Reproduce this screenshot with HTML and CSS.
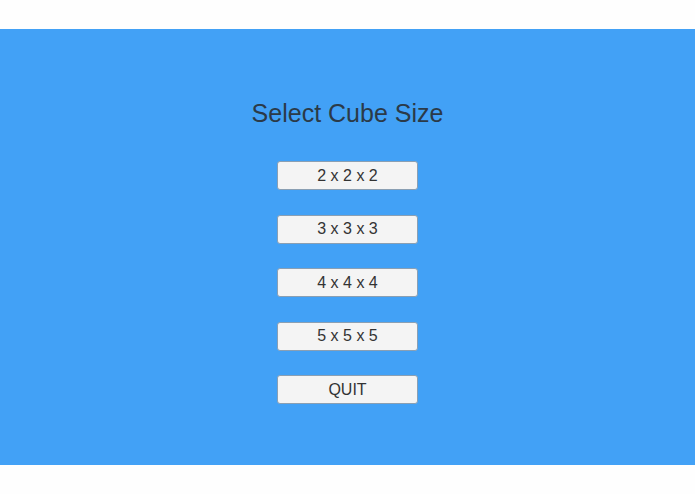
FILE: index.html
```html
<!DOCTYPE html>
<html lang="en">
<head>
    <meta charset="UTF-8">
    <meta name="viewport" content="width=device-width, initial-scale=1.0">
    <title>Select Cube Size</title>
    <link rel="stylesheet" href="styles.css">
</head>
<body>
    <div class="top-bar"></div>
    <div class="menu">
        <h1 class="title">Select Cube Size</h1>
        <div class="buttons">
            <button class="btn">2 x 2 x 2</button>
            <button class="btn">3 x 3 x 3</button>
            <button class="btn">4 x 4 x 4</button>
            <button class="btn">5 x 5 x 5</button>
            <button class="btn">QUIT</button>
        </div>
    </div>
</body>
</html>
```

FILE: styles.css
```css
body {
    margin: 0;
    background-color: #fefefe;
    font-family: "Liberation Sans", Arial, sans-serif;
}
.top-bar {
    height: 29px;
}
.menu {
    height: 436px;
    box-sizing: border-box;
    padding-top: 70px;
    background-color: #42a1f6;
    display: flex;
    flex-direction: column;
    align-items: center;
}
.title {
    margin: 0;
    font-size: 25px;
    line-height: 28px;
    font-weight: normal;
    color: #2b3a48;
}
.buttons {
    margin-top: 34px;
    display: flex;
    flex-direction: column;
    gap: 24.5px;
}
.btn {
    width: 141px;
    height: 29px;
    padding: 0;
    font-family: "Liberation Sans", Arial, sans-serif;
    font-size: 16px;
    color: #333;
    background-color: #f4f4f4;
    border: 1px solid #8a9fb3;
    border-radius: 3px;
}
```
